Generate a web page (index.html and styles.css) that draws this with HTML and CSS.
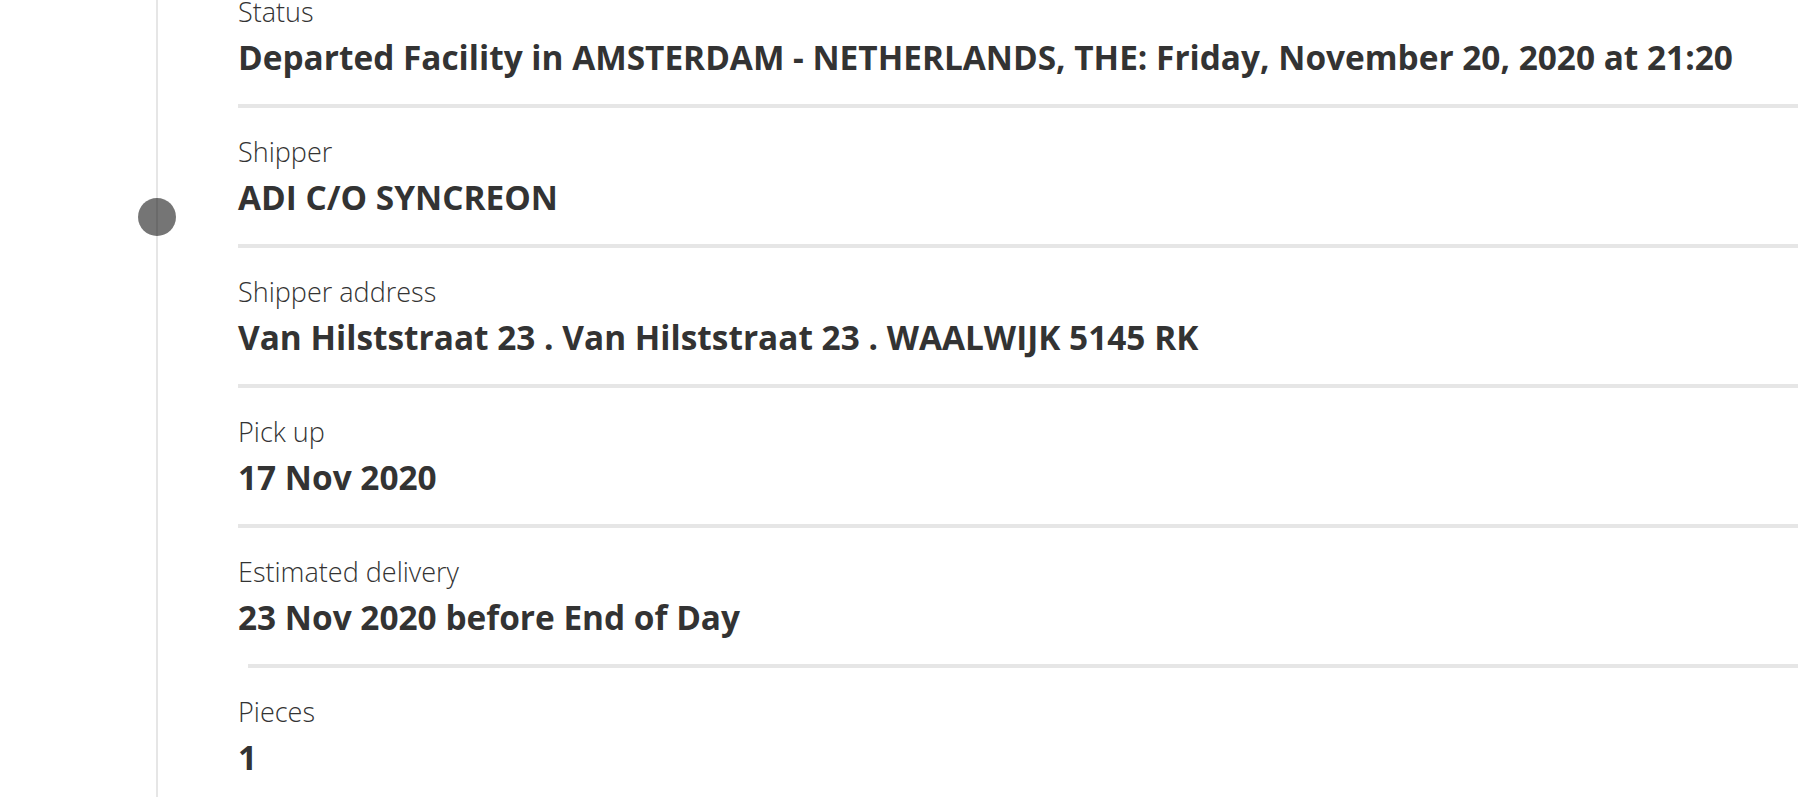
FILE: index.html
```html
<!DOCTYPE html>
<html lang="en">
<head>
<meta charset="utf-8">
<title>Shipment details</title>
<link rel="stylesheet" href="styles.css">
</head>
<body>
<main class="tracking">
  <div class="rail"></div>
  <ul class="details">
    <li class="detail">
      <span class="label">Status</span>
      <span class="value">Departed Facility in AMSTERDAM - NETHERLANDS, THE: Friday, November 20, 2020 at 21:20</span>
    </li>
    <li class="detail">
      <span class="dot"></span>
      <span class="label">Shipper</span>
      <span class="value">ADI C/O SYNCREON</span>
    </li>
    <li class="detail">
      <span class="label">Shipper address</span>
      <span class="value">Van Hilststraat 23 . Van Hilststraat 23 . WAALWIJK 5145 RK</span>
    </li>
    <li class="detail">
      <span class="label">Pick up</span>
      <span class="value">17 Nov 2020</span>
    </li>
    <li class="detail detail--offset">
      <span class="label">Estimated delivery</span>
      <span class="value">23 Nov 2020 before End of Day</span>
    </li>
    <li class="detail detail--last">
      <span class="label">Pieces</span>
      <span class="value">1</span>
    </li>
  </ul>
</main>
</body>
</html>
```
FILE: styles.css
```css
html, body {
  margin: 0;
  padding: 0;
  background: #ffffff;
}
body {
  height: 100vh;
  overflow: hidden;
  font-family: "Open Sans", "Noto Sans", sans-serif;
  color: #333333;
}
.tracking {
  display: grid;
  grid-template-columns: 238px 1fr;
  margin-top: -32px;
}
.rail {
  margin-left: 156px;
  width: 2px;
  background: #e6e6e6;
}
.details {
  list-style: none;
  margin: 0;
  padding: 0;
}
.detail {
  position: relative;
  display: flex;
  flex-direction: column;
  padding: 26px 0 25px;
  border-bottom: 4px solid #e6e6e6;
}
.detail--offset {
  border-bottom-color: transparent;
}
.detail--offset::after {
  content: "";
  position: absolute;
  left: 10px;
  right: 0;
  bottom: -4px;
  height: 4px;
  background: #e6e6e6;
}
.detail--last {
  border-bottom: none;
}
.label {
  font-size: 27px;
  font-weight: 300;
  line-height: 36px;
  white-space: nowrap;
}
.value {
  margin-top: 5px;
  font-size: 33.4px;
  font-weight: 700;
  line-height: 44px;
  white-space: nowrap;
}
.dot {
  position: absolute;
  left: -100px;
  top: 90px;
  width: 38px;
  height: 38px;
  border-radius: 50%;
  background: rgba(0, 0, 0, 0.54);
}
```
